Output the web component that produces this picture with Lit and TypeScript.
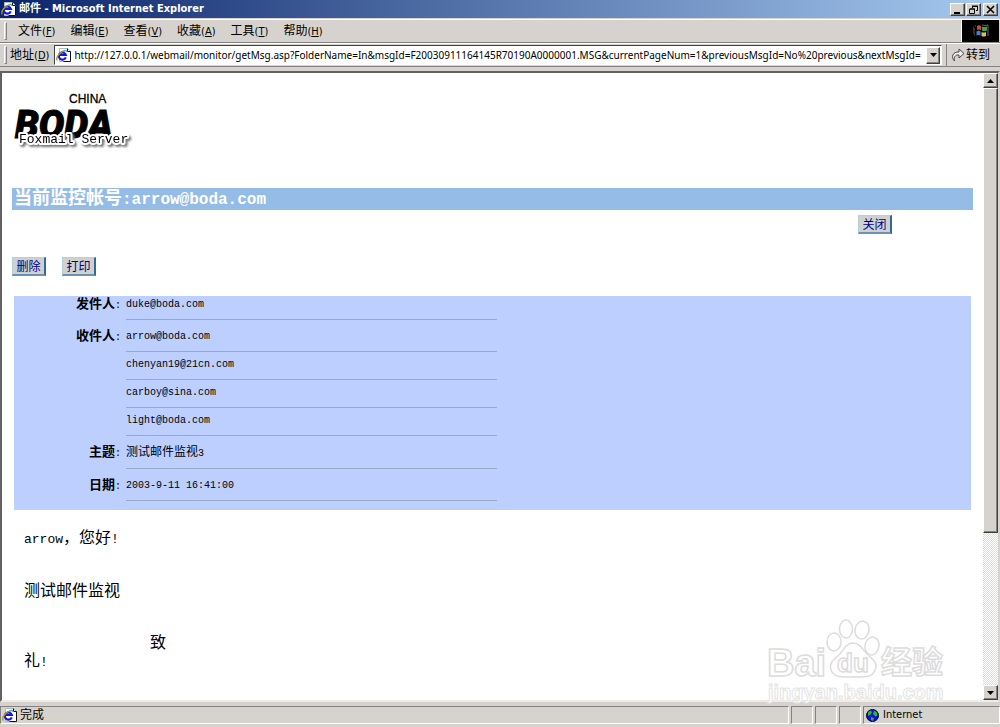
import { LitElement, html, css, svg } from "lit";
import { customElement } from "lit/decorators.js";

const menus = [
  ["文件", "F"],
  ["编辑", "E"],
  ["查看", "V"],
  ["收藏", "A"],
  ["工具", "T"],
  ["帮助", "H"],
];

const fields: { label: string; values: string[] }[] = [
  { label: "发件人", values: ["duke@boda.com"] },
  { label: "收件人", values: ["arrow@boda.com", "chenyan19@21cn.com", "carboy@sina.com", "light@boda.com"] },
  { label: "主题", values: ["测试邮件监视3"] },
  { label: "日期", values: ["2003-9-11 16:41:00"] },
];

const url =
  "http://127.0.0.1/webmail/monitor/getMsg.asp?FolderName=In&msgId=F20030911164145R70190A0000001.MSG&currentPageNum=1&previousMsgId=No%20previous&nextMsgId=";

const pageIcon = html`<svg class="icon" width="16" height="16" viewBox="0 0 16 16" aria-hidden="true">
  <path d="M3.5 1.5h8l3 3v10h-11z" fill="#fff" stroke="#b8b8b8" />
  <path d="M11.5 1.5v3h3v10h-7" fill="none" stroke="#111" />
  <path d="M9.800 10.400A3.600 3.600 0 1 1 9.900 8H4" fill="none" stroke="#1616d8" stroke-width="2.200" />
  <path d="M1.200 13.500C-.600 10.500 4 4.500 9.500 3.400" fill="none" stroke="#a09c20" stroke-width="1.300" />
  <path d="M7.500 4.200c2-1.200 3.600-1 3.400.8" fill="none" stroke="#27b5e8" stroke-width="1.200" />
</svg>`;

const arrow = (up: boolean) => svg`<svg width="7" height="4" viewBox="0 0 7 4" aria-hidden="true">
  <path d=${up ? "M0 4h7L3.5 0z" : "M0 0h7L3.5 4z"} fill="#000" /></svg>`;

@customElement("app-root")
export class AppRoot extends LitElement {
  static styles = css`
    :host {
      display: block;
      --face: #d6d3ce;
      --ui: "DejaVu Sans Condensed", "Noto Sans CJK SC", sans-serif;
      --mono: "Liberation Mono", "Noto Sans CJK SC", monospace;
    }
    * { box-sizing: border-box; }
    button, input { font: inherit; color: inherit; margin: 0; padding: 0; border-radius: 0; }
    .window {
      display: flex;
      flex-direction: column;
      height: 100vh;
      background: var(--face);
      font: 11px/16px var(--ui);
      color: #000;
      overflow: hidden;
    }
    .icon { flex: none; display: block; }
    .title {
      display: flex;
      align-items: center;
      gap: 2px;
      height: 18px;
      flex: none;
      padding: 0 2px 0 1px;
      background: linear-gradient(90deg, #0a246a, #a6caf0);
      color: #fff;
    }
    .title h1 { flex: 1; margin: 0; font: bold 11px/16px var(--ui); }
    .raised {
      display: flex;
      align-items: center;
      justify-content: center;
      background: var(--face);
      border: 1px solid;
      border-color: #fff #404040 #404040 #fff;
      box-shadow: inset -1px -1px #848284;
      color: #000;
    }
    .title .raised { width: 15px; height: 13px; }
    .winbtns { display: flex; gap: 1px; }
    .menu, .address {
      display: flex;
      align-items: center;
      flex: none;
      border-top: 1px solid #fff;
      border-bottom: 1px solid #848284;
      font-size: 12px;
    }
    .menu { height: 24px; margin-top: 1px; }
    .address { height: 24px; }
    .grip {
      flex: none;
      width: 3px;
      height: 18px;
      margin-left: 4px;
      border: 1px solid;
      border-color: #fff #848284 #848284 #fff;
    }
    .items { display: flex; flex: 1; padding-left: 11px; gap: 15px; }
    .items button { background: none; border: 0; font-size: 12px; }
    .items small, .address small { font-size: 11px; }
    .flag { display: flex; align-items: center; justify-content: center; width: 38px; height: 22px; background: #000; border-left: 1px solid #fff; margin-right: 1px; }
    .address label { margin: 0 5px 0 3px; }
    .combo {
      display: flex;
      align-items: center;
      flex: 1;
      height: 20px;
      background: #fff;
      border: 1px solid;
      border-color: #424142 #fff #fff #424142;
      padding: 0 1px;
    }
    .combo input { flex: 1; min-width: 0; height: 16px; margin-left: 2px; border: 0; background: none; outline: 0; font: 10px/16px "Noto Sans", sans-serif; }
    .combo .raised { width: 14px; height: 17px; }
    .go { display: flex; align-items: center; gap: 1px; width: 54px; height: 22px; margin-left: 4px; padding-left: 4px; background: none; border: 0; border-left: 1px solid #848284; }
    .go span { white-space: nowrap; }
    .view {
      position: relative;
      display: flex;
      flex: 1;
      min-height: 0;
      background: #fff;
      border: 2px solid;
      border-color: #636163 #d6d3ce #efebe7 #636163;
      margin-top: 4px;
    }
    .page { flex: 1; min-width: 0; padding: 16px 10px 0; overflow: hidden; font-family: var(--mono); }
    .logo { display: block; }
    .tag { paint-order: stroke; filter: drop-shadow(2px 2px 1px #777); }
    .account { margin: 36px 0 0; height: 22px; padding-left: 2px; background: #94bce7; color: #fff; font: bold 18px/22px var(--mono); }
    .account span { font-size: 16px; }
    .push {
      width: 34px;
      height: 19px;
      background: #d0d0d0;
      border: 1px solid;
      border-color: #b4d0dc #33699a #6a93b4 #b4d0dc;
      border-right-width: 2px;
      border-bottom-width: 2px;
      color: #000080;
      font: 12px/16px "Noto Sans CJK SC", sans-serif;
      white-space: nowrap;
    }
    .closing { display: flex; justify-content: flex-end; margin: 5px 81px 0 0; }
    .actions { display: flex; gap: 16px; margin-top: 23px; }
    .details { margin: 20px 2px 0; padding: 0 0 9px; background: #bdcfff; font-size: 10px; }
    .field { display: grid; grid-template-columns: 107px minmax(0, 371px); column-gap: 5px; padding-top: 10px; }
    .field:first-child { padding-top: 2px; }
    .field dt { text-align: right; font: bold 13px/14px var(--mono); white-space: nowrap; }
    .field dt span { font: 10px/14px var(--mono); }
    .field dd { grid-column: 2; margin: 0; line-height: 14px; padding-bottom: 7px; border-bottom: 1px solid #94aac6; }
    .field dd + dd { padding-top: 6px; }
    .field .cjk { font-size: 12px; }
    .field .cjk span { font-size: 10px; }
    .letter { padding: 20px 12px 0; font: 16px/18px var(--mono); }
    .letter p { margin: 0 0 34px; }
    .letter span { font-size: 13px; }
    .letter .wish { margin: 0; padding-left: 126px; }
    .scroll { display: flex; flex-direction: column; width: 15px; flex: none; background: #eceae7; }
    .scroll .raised { height: 15px; width: 15px; flex: none; }
    .track { display: flex; flex-direction: column; flex: 1; background: repeating-conic-gradient(#fff 0 25%, #dedbd6 0 50%) 0 0 / 2px 2px; }
    .scroll .thumb { flex: 445; height: auto; }
    .rest { flex: 153; }
    .mark { position: absolute; right: 52px; bottom: -4px; pointer-events: none; }
    .status { display: flex; gap: 2px; flex: none; height: 25px; padding: 4px 0 3px; }
    .cell { display: flex; align-items: center; gap: 4px; padding-left: 2px; border: 1px solid; border-color: #848284 #fff #fff #848284; }
    .main { flex: 1; gap: 2px; padding-left: 1px; }
    .slot { width: 22px; }
    .zone { width: 137px; }
    .main span { font-size: 12px; }
  `;

  render() {
    return html`
      <div class="window">
        <header class="title">
          ${pageIcon}
          <h1>邮件 - Microsoft Internet Explorer</h1>
          <div class="winbtns">
            <button class="raised" aria-label="Minimize"><svg width="9" height="9"><path d="M1 8h6" stroke="#000" stroke-width="2" /></svg></button>
            <button class="raised" aria-label="Restore"><svg width="9" height="9"><path d="M3.5 3V1.5h5v4H7M3 1h6M1 4h5M.5 4v4.500h5V4z" fill="none" stroke="#000" /></svg></button>
          </div>
          <button class="raised" aria-label="Close"><svg width="9" height="9"><path d="M1 1l7 7M8 1L1 8" stroke="#000" stroke-width="1.6" /></svg></button>
        </header>
        <nav class="menu">
          <i class="grip"></i>
          <div class="items">
            ${menus.map(([name, key]) => html`<button>${name}<small>(<u>${key}</u>)</small></button>`)}
          </div>
          <div class="flag">
            <svg width="18" height="16" viewBox="0 0 18 16" aria-hidden="true">
              <path d="M5 3q2-1.500 4 0v4q-2-1-4 0z" fill="#c8502c" />
              <path d="M10 3.500q2 1 5 0v4q-3 1-5 0z" fill="#46a04c" />
              <path d="M4.500 8.500q2-1.500 4 0v4q-2-1-4 0z" fill="#4a7ed0" />
              <path d="M9.500 9q2 1 4.500 0v4q-2.500 1-4.500 0z" fill="#e0c040" />
              <path d="M1 4h1M3 3h1M1 6h2M1 8h2M1 10h2M2 12h1" stroke="#8a4a4a" />
              <path d="M10 2q3 1 6 0v11" stroke="#667" fill="none" />
            </svg>
          </div>
        </nav>
        <div class="address">
          <i class="grip"></i>
          <label for="url">地址<small>(<u>D</u>)</small></label>
          <div class="combo">
            ${pageIcon}
            <input id="url" type="text" .value=${url} />
            <button class="raised" aria-label="Show addresses">${arrow(false)}</button>
          </div>
          <button class="go">
            <svg class="icon" width="14" height="14" viewBox="0 0 14 14" aria-hidden="true">
              <path d="M3.500 13C-.5 9 2 3.500 8 4V1l5 4.500L8 10V7C4.500 6.500 2.500 9 3.500 13z" fill="#eee" stroke="#444" />
            </svg>
            <span>转到</span>
          </button>
        </div>
        <div class="view">
          <main class="page">
            <svg class="logo" width="124" height="63" viewBox="0 0 124 63" role="img" aria-label="China Boda Foxmail Server">
              <text x="57" y="14" font-family="Liberation Sans" font-size="12" stroke="#000" stroke-width=".3">CHINA</text>
              <text x="3" y="49" font-family="Roboto" font-weight="900" font-style="italic" font-size="38" stroke="#000" stroke-width="1">BODA</text>
              <text class="tag" x="7" y="54" font-family="Liberation Mono" font-size="13" stroke="#fff" stroke-width="4" stroke-linejoin="round">Foxmail Server</text>
            </svg>
            <h2 class="account">当前监控帐号<span>:arrow@boda.com</span></h2>
            <div class="closing"><button class="push">关闭</button></div>
            <div class="actions">
              <button class="push">删除</button>
              <button class="push">打印</button>
            </div>
            <dl class="details">
              ${fields.map(
                (f) => html`<div class="field">
                  <dt>${f.label}<span>:</span></dt>
                  ${f.values.map((v) =>
                    v.startsWith("测") ? html`<dd class="cjk">${v.slice(0, -1)}<span>${v.slice(-1)}</span></dd>` : html`<dd>${v}</dd>`
                  )}
                </div>`
              )}
            </dl>
            <article class="letter">
              <p><span>arrow</span>，您好<span>!</span></p>
              <p>测试邮件监视</p>
              <p class="wish">致</p>
              <p>礼<span>!</span></p>
            </article>
          </main>
          <div class="scroll">
            <button class="raised" aria-label="Scroll up">${arrow(true)}</button>
            <div class="track"><div class="raised thumb"></div><div class="rest"></div></div>
            <button class="raised" aria-label="Scroll down">${arrow(false)}</button>
          </div>
          <svg class="mark" width="184" height="88" viewBox="0 0 184 88" aria-hidden="true">
            <g fill="#fff" stroke="#dcdcdc" stroke-width="1.500">
              <ellipse cx="72" cy="26" rx="7" ry="9" />
              <ellipse cx="84" cy="13" rx="6.500" ry="9" />
              <ellipse cx="100" cy="14" rx="7" ry="9" transform="rotate(12 100 14)" />
              <ellipse cx="110" cy="30" rx="7" ry="9" transform="rotate(12 110 30)" />
              <path d="M91 27c7 0 10 7 15 12 6 5 10 9 7 15-3 8-11 7-22 7s-19 1-22-7c-2-7 2-10 8-15 5-5 7-12 14-12z" />
            </g>
            <g fill="#fff" stroke="#dcdcdc" stroke-width="1.500" font-family="Liberation Sans" font-weight="bold">
              <text x="5" y="60" font-size="38">Bai</text>
              <text x="75" y="56" font-size="26">du</text>
              <text x="119" y="57" font-family="Noto Sans CJK SC" font-size="31">经验</text>
              <text x="6" y="83" font-size="20" stroke="#e4e4e4" stroke-width="1">jingyan.baidu.com</text>
            </g>
          </svg>
        </div>
        <footer class="status">
          <div class="cell main">${pageIcon}<span>完成</span></div>
          <div class="cell slot"></div>
          <div class="cell slot"></div>
          <div class="cell slot"></div>
          <div class="cell zone">
            <svg class="icon" width="13" height="13" viewBox="0 0 13 13" aria-hidden="true">
              <circle cx="6.500" cy="6.500" r="6" fill="#1010d8" stroke="#002" />
              <path d="M2 3l3-1.500 1 2L4 6 2 7zM8 1.500l3 2 .5 3-2 1L7 5zM5 8l3 1-1 3-2-1z" fill="#20c020" />
            </svg>
            <span>Internet</span>
          </div>
        </footer>
      </div>
    `;
  }
}
